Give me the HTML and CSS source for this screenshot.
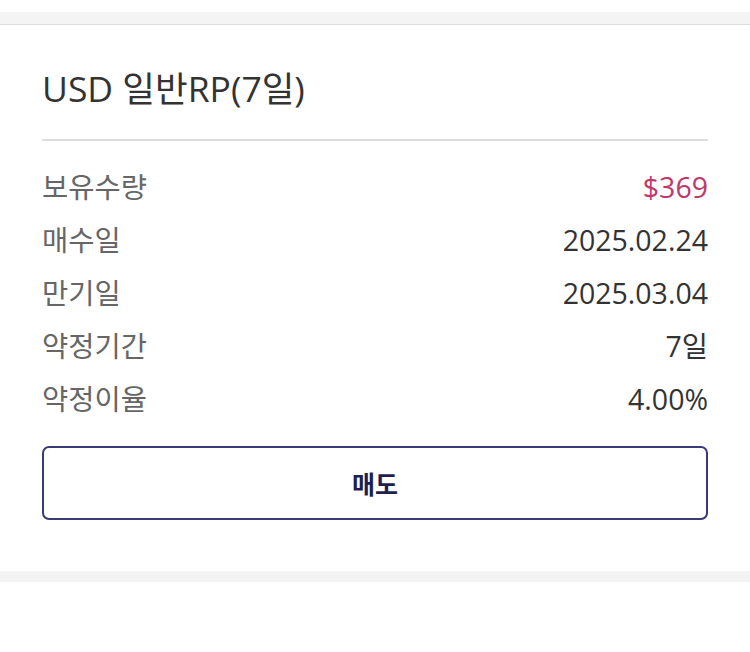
FILE: index.html
```html
<!DOCTYPE html>
<html lang="ko">
<head>
<meta charset="utf-8">
<link rel="stylesheet" href="styles.css">
</head>
<body>
<div class="top-space"></div>
<div class="band band-top"></div>
<section class="card">
  <h1 class="title">USD 일반RP(7일)</h1>
  <div class="rows">
    <div class="row"><span class="label">보유수량</span><span class="value pink">$369</span></div>
    <div class="row"><span class="label">매수일</span><span class="value">2025.02.24</span></div>
    <div class="row"><span class="label">만기일</span><span class="value">2025.03.04</span></div>
    <div class="row"><span class="label">약정기간</span><span class="value">7일</span></div>
    <div class="row"><span class="label">약정이율</span><span class="value">4.00%</span></div>
  </div>
  <button class="sell">매도</button>
</section>
<div class="band band-bottom"></div>
</body>
</html>
```

FILE: styles.css
```css
html, body {
  margin: 0;
  padding: 0;
  background: #ffffff;
  font-family: "Open Sans", "Noto Sans CJK KR", sans-serif;
}
.top-space {
  height: 12px;
}
.band {
  background: #f4f4f4;
}
.band-top {
  height: 12px;
  border-bottom: 1px solid #dcdcdc;
}
.band-bottom {
  height: 11px;
}
.card {
  padding: 42px 42px 51px 42px;
}
.title {
  margin: 0;
  font-size: 35.5px;
  font-weight: 400;
  line-height: 42px;
  color: #333333;
  padding-bottom: 30px;
  border-bottom: 2px solid #dddddd;
}
.rows {
  padding-top: 20px;
  display: flex;
  flex-direction: column;
}
.row {
  display: flex;
  justify-content: space-between;
  align-items: center;
  height: 53px;
  font-size: 28.5px;
  line-height: 53px;
}
.label {
  color: #666666;
}
.value {
  color: #333333;
}
.value.pink {
  color: #c0386b;
}
.sell {
  display: block;
  width: 100%;
  margin-top: 20px;
  height: 74px;
  background: #ffffff;
  border: 2px solid #3a3a78;
  border-radius: 7px;
  font-family: "Noto Sans CJK KR", sans-serif;
  font-size: 25px;
  font-weight: 700;
  color: #1e1e50;
  cursor: pointer;
}
```
